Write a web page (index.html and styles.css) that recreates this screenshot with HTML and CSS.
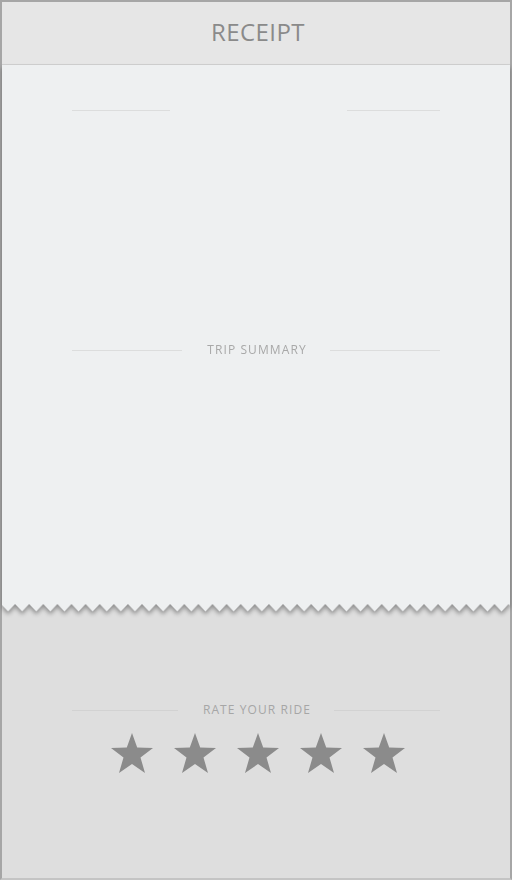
FILE: index.html
```html
<!DOCTYPE html>
<html>
<head>
<meta charset="utf-8">
<link rel="stylesheet" href="styles.css">
</head>
<body>
<div class="frame">
  <header class="topbar"><h1 class="title">RECEIPT</h1></header>
  <div class="paper-wrap">
    <section class="paper">
      <div class="divider divider-blank"><span class="line"></span><span class="gap"></span><span class="line"></span></div>
      <div class="divider divider-trip"><span class="line"></span><span class="label">TRIP SUMMARY</span><span class="line"></span></div>
    </section>
    <svg class="zigzag" width="508" height="8" viewBox="0 0 508 8" preserveAspectRatio="none">
      <defs>
        <pattern id="teeth" x="-1" y="0" width="14.1" height="8" patternUnits="userSpaceOnUse">
          <polygon points="0,0 14.1,0 7.05,7.5" fill="#eef0f1"/>
        </pattern>
      </defs>
      <rect x="0" y="0" width="508" height="8" fill="url(#teeth)"/>
    </svg>
  </div>
  <section class="rating">
    <div class="divider divider-rate"><span class="line"></span><span class="label">RATE YOUR RIDE</span><span class="line"></span></div>
    <div class="stars">
      <svg class="star" viewBox="0 0 44 42"><polygon points="22,1 27.2,15.5 43,15.9 30.5,25.5 35,41 22,32 9,41 13.5,25.5 1,15.9 16.8,15.5"/></svg>
      <svg class="star" viewBox="0 0 44 42"><polygon points="22,1 27.2,15.5 43,15.9 30.5,25.5 35,41 22,32 9,41 13.5,25.5 1,15.9 16.8,15.5"/></svg>
      <svg class="star" viewBox="0 0 44 42"><polygon points="22,1 27.2,15.5 43,15.9 30.5,25.5 35,41 22,32 9,41 13.5,25.5 1,15.9 16.8,15.5"/></svg>
      <svg class="star" viewBox="0 0 44 42"><polygon points="22,1 27.2,15.5 43,15.9 30.5,25.5 35,41 22,32 9,41 13.5,25.5 1,15.9 16.8,15.5"/></svg>
      <svg class="star" viewBox="0 0 44 42"><polygon points="22,1 27.2,15.5 43,15.9 30.5,25.5 35,41 22,32 9,41 13.5,25.5 1,15.9 16.8,15.5"/></svg>
    </div>
  </section>
</div>
</body>
</html>
```
FILE: styles.css
```css
* { box-sizing: border-box; }
html, body { margin: 0; padding: 0; }
body {
  width: 512px;
  height: 880px;
  overflow: hidden;
  font-family: "Open Sans", "DejaVu Sans", sans-serif;
  background: #dedede;
}
.frame {
  width: 512px;
  height: 880px;
  display: flex;
  flex-direction: column;
  border: 2px solid #a6a6a6;
  border-bottom: 2px solid #c4c4c4;
  background: #dedede;
}
.topbar {
  height: 63px;
  flex: none;
  background: #e6e6e6;
  border-bottom: 1px solid #d2d2d2;
  display: flex;
  align-items: center;
  justify-content: center;
}
.title {
  margin: 0;
  font-weight: 400;
  font-size: 24px;
  letter-spacing: 0.4px;
  color: #8a8a8a;
  padding-left: 4px;
  padding-bottom: 3px;
}
.paper-wrap {
  flex: none;
  display: flex;
  flex-direction: column;
  filter: drop-shadow(0 3px 2px rgba(0,0,0,0.35));
}
.paper {
  height: 539px;
  background: #eef0f1;
  padding: 0 70px;
  display: flex;
  flex-direction: column;
}
.zigzag {
  display: block;
  width: 508px;
  height: 8px;
}
.divider {
  display: flex;
  align-items: center;
}
.line {
  flex: 1;
  height: 1px;
  background: #dcdddd;
}
.gap { width: 177px; }
.divider-blank { margin-top: 45px; }
.divider-blank .line:first-child { flex: 0 0 98px; }
.divider-trip { margin-top: 231px; }
.label {
  font-size: 12px;
  color: #a8a8a8;
  letter-spacing: 1.1px;
  padding: 0 23px 0 25px;
  line-height: 16px;
}
.rating {
  flex: 1;
  display: flex;
  flex-direction: column;
  padding: 0 70px;
}
.divider-rate { margin-top: 90px; }
.divider-rate .line { background: #d2d2d2; }
.divider-rate .label { color: #a6a6a6; padding: 0 23px 0 25px; letter-spacing: 1.1px; }
.stars {
  display: flex;
  justify-content: center;
  gap: 19px;
  margin-top: 14px;
  padding-left: 4px;
}
.star {
  width: 44px;
  height: 42px;
  fill: #8b8b8b;
}
```
